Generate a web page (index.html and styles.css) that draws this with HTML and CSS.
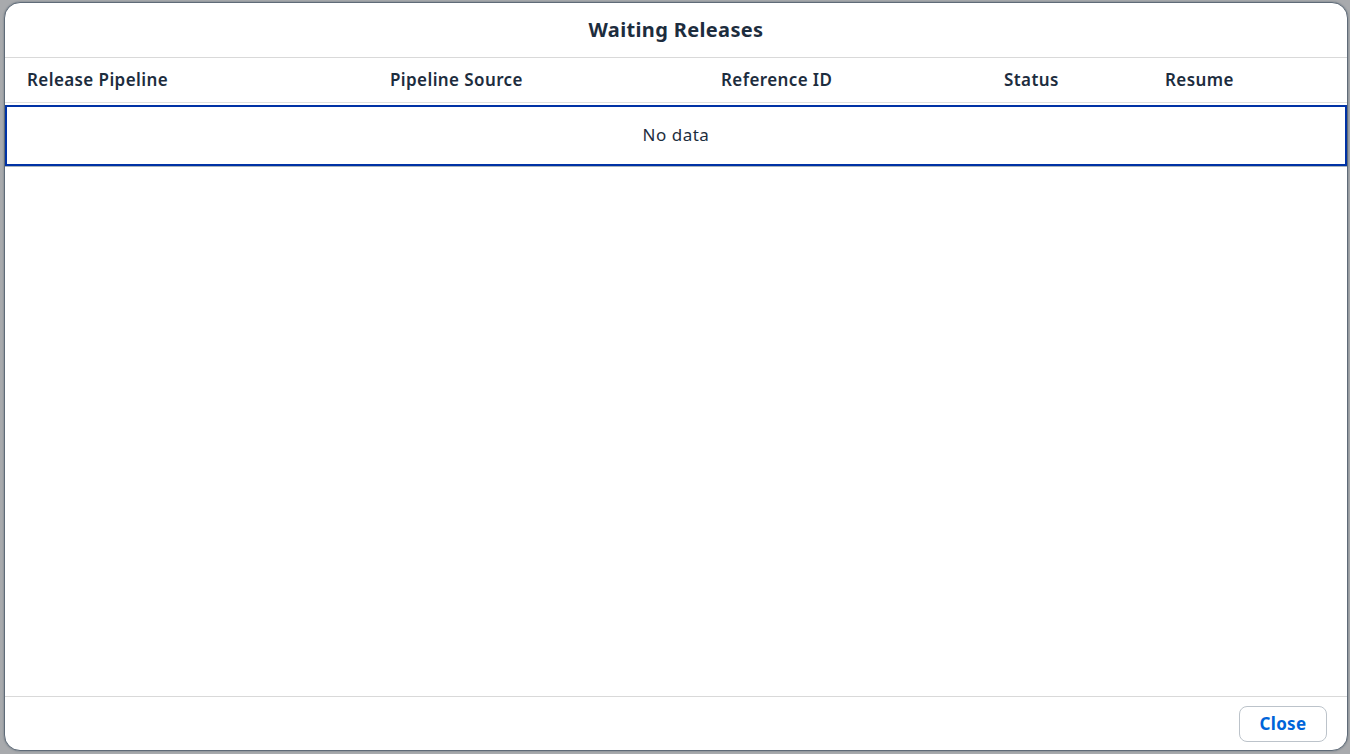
FILE: index.html
```html
<!DOCTYPE html>
<html lang="en">
<head>
<meta charset="utf-8">
<title>Waiting Releases</title>
<link rel="stylesheet" href="styles.css">
</head>
<body>
<div class="backdrop">
  <div class="dialog" role="dialog" aria-labelledby="dlg-title">
    <header class="dialog-header">
      <h1 id="dlg-title" class="dialog-title">Waiting Releases</h1>
    </header>
    <div class="dialog-content">
      <div class="table">
        <div class="table-head">
          <div class="th c1">Release Pipeline</div>
          <div class="th c2">Pipeline Source</div>
          <div class="th c3">Reference ID</div>
          <div class="th c4">Status</div>
          <div class="th c5">Resume</div>
        </div>
        <div class="no-data" tabindex="0">No data</div>
      </div>
    </div>
    <footer class="dialog-footer">
      <button class="btn" type="button">Close</button>
    </footer>
  </div>
</div>
</body>
</html>
```

FILE: styles.css
```css
* { box-sizing: border-box; }
html, body {
  margin: 0;
  padding: 0;
  height: 100%;
}
body {
  background: #a8aaad;
  font-family: "Noto Sans", "Liberation Sans", Arial, sans-serif;
  color: #1d2d3e;
  overflow: hidden;
}
.backdrop {
  padding: 2px 2px 3px 4px;
  height: 754px;
}
.dialog {
  height: 749px;
  background: #fff;
  border-radius: 16px;
  border: 1px solid #5f6b78;
  box-shadow: 0 0 2px rgba(34, 53, 72, 0.5);
  display: flex;
  flex-direction: column;
  overflow: hidden;
}
.dialog-header {
  height: 55px;
  flex: 0 0 auto;
  display: flex;
  align-items: center;
  justify-content: center;
  padding-bottom: 2px;
  border-bottom: 1px solid #d9d9d9;
}
.dialog-title {
  margin: 0;
  font-size: 20px;
  font-weight: 700;
  color: #1d2d3e;
  letter-spacing: 0.35px;
}
.dialog-content {
  flex: 1 1 auto;
}
.table-head {
  display: grid;
  grid-template-columns: 363px 331px 283px 161px 1fr;
  height: 45px;
  align-items: center;
  padding-bottom: 1px;
  border-bottom: 1px solid #e0e0e0;
}
.th {
  padding-left: 22px;
  font-size: 17px;
  font-weight: 600;
  color: #1d2d3e;
  letter-spacing: 0.4px;
}
.no-data {
  height: 64px;
  display: flex;
  align-items: center;
  justify-content: center;
  padding-bottom: 2px;
  font-size: 17px;
  letter-spacing: 0.5px;
  color: #1d2d3e;
  border-top: 2px solid #fff;
  border-bottom: 1px solid #a8b3bd;
  box-shadow: inset 0 2px 0 #0032a5, inset 2px 0 0 #0032a5, inset -2px 0 0 #0032a5, inset 0 -2px 0 #0032a5;
  outline: none;
}
.dialog-footer {
  height: 54px;
  flex: 0 0 auto;
  border-top: 1px solid #d9d9d9;
  display: flex;
  align-items: center;
  justify-content: flex-end;
  padding-right: 20px;
}
.btn {
  width: 88px;
  height: 36px;
  border: 1px solid #bcc3ca;
  border-radius: 8px;
  background: #fff;
  color: #0064d9;
  font-family: inherit;
  font-size: 17px;
  font-weight: 700;
  letter-spacing: 0.3px;
  cursor: pointer;
}
```
